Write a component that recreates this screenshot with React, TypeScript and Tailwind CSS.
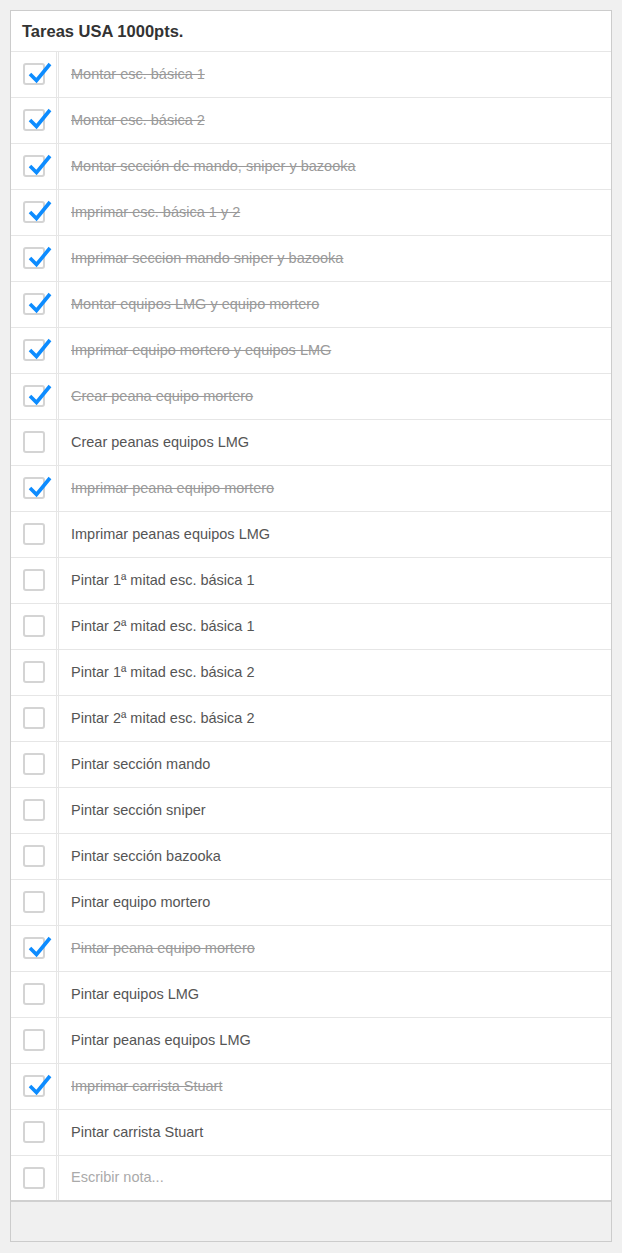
import React, { useState } from 'react';

type Task = { text: string; done: boolean };

const initialTasks: Task[] = [
  { text: 'Montar esc. básica 1', done: true },
  { text: 'Montar esc. básica 2', done: true },
  { text: 'Montar sección de mando, sniper y bazooka ', done: true },
  { text: 'Imprimar esc. básica 1 y 2', done: true },
  { text: 'Imprimar seccion mando sniper y bazooka', done: true },
  { text: 'Montar equipos LMG y equipo mortero', done: true },
  { text: 'Imprimar equipo mortero y equipos LMG', done: true },
  { text: 'Crear peana equipo mortero', done: true },
  { text: 'Crear peanas equipos LMG', done: false },
  { text: 'Imprimar peana equipo mortero', done: true },
  { text: 'Imprimar peanas equipos LMG', done: false },
  { text: 'Pintar 1ª mitad esc. básica 1', done: false },
  { text: 'Pintar 2ª mitad esc. básica 1', done: false },
  { text: 'Pintar 1ª mitad esc. básica 2', done: false },
  { text: 'Pintar 2ª mitad esc. básica 2', done: false },
  { text: 'Pintar sección mando', done: false },
  { text: 'Pintar sección sniper', done: false },
  { text: 'Pintar sección bazooka', done: false },
  { text: 'Pintar equipo mortero', done: false },
  { text: 'Pintar peana equipo mortero', done: true },
  { text: 'Pintar equipos LMG', done: false },
  { text: 'Pintar peanas equipos LMG', done: false },
  { text: 'Imprimar carrista Stuart', done: true },
  { text: 'Pintar carrista Stuart', done: false },
];

const CheckBox: React.FC<{ checked: boolean; onClick?: () => void }> = ({ checked, onClick }) => (
  <button
    type="button"
    onClick={onClick}
    className="relative w-[22px] h-[22px] rounded-[3px] border-2 border-[#d4d4d4] bg-white"
  >
    {checked && (
      <svg
        className="absolute left-[1px] top-[-4px] overflow-visible"
        width="28"
        height="24"
        viewBox="0 0 28 24"
      >
        <path
          d="M4 13 L10.5 19.5 L24 3"
          fill="none"
          stroke="#0d8cff"
          strokeWidth="3.6"
          strokeLinecap="butt"
          strokeLinejoin="miter"
        />
      </svg>
    )}
  </button>
);

export default function App() {
  const [tasks, setTasks] = useState<Task[]>(initialTasks);

  const toggle = (i: number) =>
    setTasks((prev) => prev.map((t, j) => (j === i ? { ...t, done: !t.done } : t)));

  return (
    <div
      className="min-h-[1253px] bg-[#f0f0f0] pt-[10px] px-[10px]"
      style={{ fontFamily: '"Liberation Sans", Arial, sans-serif' }}
    >
      <div className="w-[602px] border border-[#cccccc] bg-white">
        {/* Header */}
        <div className="h-[41px] border-b border-[#e6e6e6] flex items-center pl-[11px]">
          <h1 className="text-[16.5px] font-bold text-[#333333]">Tareas USA 1000pts.</h1>
        </div>

        {/* Tasks */}
        {tasks.map((task, i) => (
          <div key={i} className="h-[46px] flex border-b border-[#e6e6e6]">
            <div className="w-[45px] shrink-0 flex items-center justify-center pb-[1px]">
              <CheckBox checked={task.done} onClick={() => toggle(i)} />
            </div>
            <div className="w-[3px] border-x border-[#e6e6e6]" />
            <div
              className={`flex items-center pl-[12px] text-[14.5px] ${
                task.done ? 'text-[#9a9a9a] line-through' : 'text-[#555555]'
              }`}
            >
              {task.text}
            </div>
          </div>
        ))}

        {/* New note */}
        <div className="h-[46px] flex border-b-2 border-[#d0d0d0]">
          <div className="w-[45px] shrink-0 flex items-center justify-center pb-[1px]">
            <CheckBox checked={false} />
          </div>
          <div className="w-[3px] border-x border-[#e6e6e6]" />
          <div className="flex items-center pl-[12px] text-[14.5px] text-[#aaaaaa]">Escribir nota...</div>
        </div>

        {/* Footer */}
        <div className="h-[39px] bg-[#f0f0f0]" />
      </div>
    </div>
  );
}
